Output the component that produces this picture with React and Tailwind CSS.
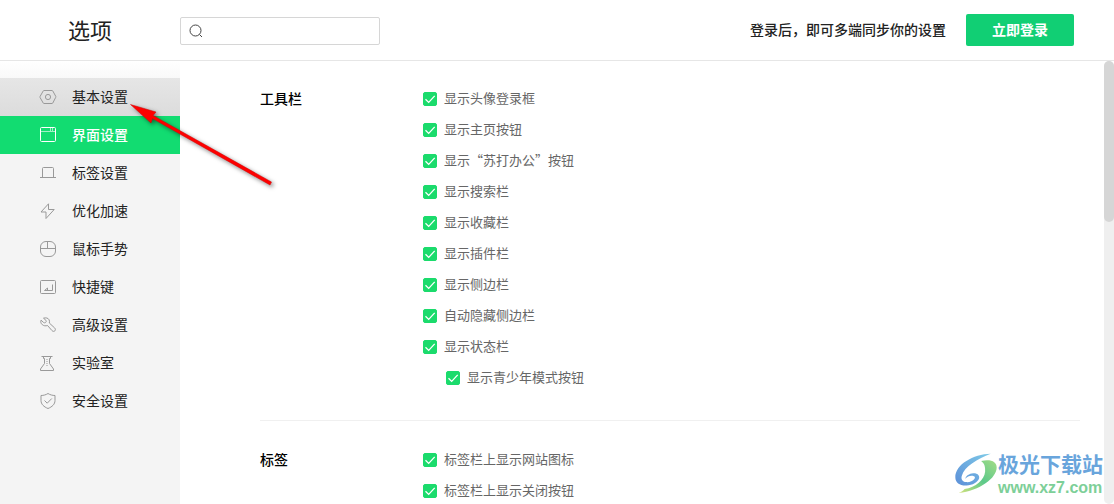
import { useState } from "react";

const iconProps = {
  width: 18,
  height: 18,
  viewBox: "0 0 18 18",
  fill: "none",
  stroke: "currentColor",
  strokeWidth: 1,
  "aria-hidden": true,
};

const BasicIcon = () => (
  <svg {...iconProps}>
    <path d="M5 2.5h8c.4 0 .6.2.8.5l2.9 5.2c.2.4.2.8 0 1.2L13.8 15c-.2.3-.4.5-.8.5H5c-.4 0-.6-.2-.8-.5L1.1 9.6c-.2-.4-.2-.8 0-1.2L4.2 3c.2-.3.4-.5.8-.5z" />
    <circle cx="9" cy="9" r="2.6" />
  </svg>
);

const WindowIcon = () => (
  <svg {...iconProps}>
    <rect x="1.5" y="1.5" width="15" height="14" rx="1" />
    <path d="M2 5.5h14M11.5 2v3M13.5 2v3" opacity="0.6" />
  </svg>
);

const TabIcon = () => (
  <svg {...iconProps}>
    <path d="M1 13.5h16M3.5 13.5V4.5a1 1 0 0 1 1-1h9a1 1 0 0 1 1 1v9" />
  </svg>
);

const BoltIcon = () => (
  <svg {...iconProps}>
    <path d="M9.5 1.8 2 10h5v6.5l8.200-9H9.500z" strokeLinejoin="round" />
  </svg>
);

const MouseIcon = () => (
  <svg {...iconProps}>
    <rect x="1.5" y="1.5" width="15" height="15" rx="5.5" />
    <path d="M1.5 8.5h15M8.5 1.5v7" />
  </svg>
);

const KeyIcon = () => (
  <svg {...iconProps}>
    <rect x="1.5" y="2.5" width="15" height="13" rx="1" />
    <path d="M13.5 6.500v6H5.500l3-2.500v2" />
  </svg>
);

const WrenchIcon = () => (
  <svg {...iconProps}>
    <path
      d="M4.5 2.200c2.400-.8 4.700-.2 5.600 1.600.5 1 .5 2 .2 3.200l5.300 4.900c1 1 1 2.100.3 2.900-.8.800-2 .800-2.900-.2L8.500 9.500c-1.700.6-3.900.4-5.200-.8C1.800 7.400 1.400 5.700 2 4.200l2.600 2.300c.8.500 1.600.4 2.200-.2.600-.6.600-1.300.1-2z"
      strokeLinejoin="round"
    />
  </svg>
);

const LabIcon = () => (
  <svg {...iconProps}>
    <path
      d="M2.500 2.500h11M4.500 2.500v2h1v5L1.500 15v1.500h13V15l-4-5.500v-5h1v-2"
      strokeLinejoin="round"
    />
    <path d="M8 5v7" strokeDasharray="1 1" />
  </svg>
);

const ShieldIcon = () => (
  <svg {...iconProps}>
    <path
      d="M9 1.500c2 1.300 4.500 2 7 2v5c0 3.700-2.800 6.300-7 8-4.200-1.700-7-4.300-7-8v-5c2.500 0 5-.7 7-2z"
      strokeLinejoin="round"
    />
    <path d="m5.500 8.500 2.700 2.700 4.600-4.700" />
  </svg>
);

const menu = [
  { label: "基本设置", Icon: BasicIcon },
  { label: "界面设置", Icon: WindowIcon },
  { label: "标签设置", Icon: TabIcon },
  { label: "优化加速", Icon: BoltIcon },
  { label: "鼠标手势", Icon: MouseIcon },
  { label: "快捷键", Icon: KeyIcon },
  { label: "高级设置", Icon: WrenchIcon },
  { label: "实验室", Icon: LabIcon },
  { label: "安全设置", Icon: ShieldIcon },
];

const toolbarOptions = [
  { label: "显示头像登录框" },
  { label: "显示主页按钮" },
  { label: "显示“苏打办公”按钮" },
  { label: "显示搜索栏" },
  { label: "显示收藏栏" },
  { label: "显示插件栏" },
  { label: "显示侧边栏" },
  { label: "自动隐藏侧边栏" },
  { label: "显示状态栏" },
  { label: "显示青少年模式按钮", nested: true },
];

const tabOptions = [
  { label: "标签栏上显示网站图标" },
  { label: "标签栏上显示关闭按钮" },
];

const Option = ({ label, nested }) => (
  <label
    className={`flex h-5 items-center gap-[7px] text-[13px] text-[#666] ${nested ? "pl-[23px]" : ""}`}
  >
    <span className="relative size-3.5">
      <input
        type="checkbox"
        defaultChecked
        className="peer block size-3.5 appearance-none rounded-[2px] border border-gray-300 checked:border-[#1bdb6c] checked:bg-[#1bdb6c]"
      />
      <svg
        viewBox="0 0 14 14"
        fill="none"
        stroke="white"
        strokeWidth="1.3"
        className="pointer-events-none absolute inset-0 hidden size-3.5 peer-checked:block"
        aria-hidden="true"
      >
        <path d="m2.500 7.200 3.200 3.200 6-6.500" />
      </svg>
    </span>
    <span className="pb-0.5">{label}</span>
  </label>
);

const Section = ({ title, options }) => (
  <section className="flex">
    <h2 className="w-[163px] shrink-0 text-sm leading-[18px] font-medium text-black">
      {title}
    </h2>
    <div className="flex flex-col gap-[11px]">
      {options.map((option) => (
        <Option key={option.label} {...option} />
      ))}
    </div>
  </section>
);

const Arrow = () => (
  <svg
    width="160"
    height="100"
    viewBox="0 0 160 100"
    className="pointer-events-none absolute top-[95px] left-[122px] overflow-visible"
    style={{ filter: "drop-shadow(2px 2px 2px rgba(0,0,0,0.5))" }}
    aria-hidden="true"
  >
    <path
      d="M8.500 9.500 34 17l-3 3.500L149.500 87l-1.500 3L30.500 23.500 29 28z"
      fill="#fe0000"
      stroke="#d00404"
      strokeWidth="0.5"
    />
  </svg>
);

const Watermark = () => (
  <div className="pointer-events-none absolute right-[11px] bottom-1.5 flex items-center gap-px">
    <svg width="43" height="43" viewBox="26 22 130 130" aria-hidden="true">
      <defs>
        <linearGradient id="swooshBlue" x1="0" y1="1" x2="1" y2="0">
          <stop offset="0" stopColor="#5c8fd8" />
          <stop offset="1" stopColor="#7fcbe8" />
        </linearGradient>
        <linearGradient id="swooshGreen" x1="0" y1="1" x2="1" y2="0">
          <stop offset="0" stopColor="#d3e27c" />
          <stop offset="0.5" stopColor="#5cc98a" />
          <stop offset="1" stopColor="#a3dc86" />
        </linearGradient>
      </defs>
      <path
        d="M137 27C84 28 30 60 30 98c0 17 14 26 34 25 18-1 34-10 38-22 2-9-6-16-18-15-12 1-22 8-24 17 6-7 14-10 22-9 7 1 9 5 6 9-5 7-16 11-25 10-12-1-17-9-13-20C57 66 98 42 137 27z"
        fill="url(#swooshBlue)"
      />
      <path
        d="M108 49c30-6 47 2 47 20 0 32-51 70-115 77 8-3 14-7 18-12 34-4 60-28 62-52 1-16-2-26-12-33z"
        fill="url(#swooshGreen)"
      />
    </svg>
    <div className="flex flex-col">
      <span className="text-[21px] leading-[30px] font-bold text-[#69a5dc]">
        极光下载站
      </span>
      <span className="font-['Liberation_Sans',sans-serif] text-[16px] leading-5 font-bold text-[#7dcf98]">
        www.xz7.com
      </span>
    </div>
  </div>
);

export default function App() {
  const [active, setActive] = useState("界面设置");

  return (
    <div className="relative flex h-screen flex-col overflow-hidden bg-white font-['Noto_Sans_CJK_SC',sans-serif] text-[#222]">
      <header className="flex h-[61px] shrink-0 items-center border-b border-[#e6e6e6] pr-10 pl-[68px]">
        <h1 className="w-28 pb-0.5 text-[22px]">选项</h1>
        <label className="mt-0.5 flex h-7 w-[200px] items-center rounded-[2px] border border-[#d6d6d6] px-[7px]">
          <svg
            width="16"
            height="16"
            viewBox="0 0 16 16"
            fill="none"
            stroke="#444"
            strokeWidth="1"
            aria-hidden="true"
          >
            <circle cx="7.5" cy="7.5" r="5.5" />
            <path d="m11.500 11.500 2.500 2.500" />
          </svg>
          <input
            type="text"
            aria-label="搜索"
            className="ml-1 min-w-0 flex-1 text-sm outline-none"
          />
        </label>
        <p className="ml-auto pb-0.5 text-sm font-medium">
          登录后，即可多端同步你的设置
        </p>
        <button
          type="button"
          className="ml-5 h-8 w-[108px] rounded-[2px] bg-[#11cf74] pb-0.5 text-sm font-bold text-white"
        >
          立即登录
        </button>
      </header>

      <div className="flex min-h-0 flex-1">
        <nav className="flex w-[180px] shrink-0 flex-col bg-[#f4f4f4]">
          <div className="h-[17px] shrink-0 bg-linear-to-b from-white to-[#f9f9f9]" />
          {menu.map(({ label, Icon }, index) => (
            <button
              key={label}
              type="button"
              onClick={() => setActive(label)}
              className={`flex h-[38px] shrink-0 items-center gap-[15px] pl-[39px] text-sm ${
                label === active
                  ? "bg-[#12dc71] font-medium text-white"
                  : index === 0
                    ? "bg-linear-to-b from-[#e6e6e6] to-[#dcdcdc]"
                    : ""
              }`}
            >
              <span className={label === active ? "text-white" : "text-[#999]"}>
                <Icon />
              </span>
              <span className="pb-0.5">{label}</span>
            </button>
          ))}
        </nav>

        <main className="min-w-0 flex-1 overflow-hidden pt-7 pr-6 pl-20">
          <Section title="工具栏" options={toolbarOptions} />
          <hr className="mt-8 mb-[29px] border-[#f0f0f0]" />
          <Section title="标签" options={tabOptions} />
        </main>

        {/* Scrollbar */}
        <div className="w-2.5 shrink-0 rounded-full bg-[#efefef]">
          <div className="h-[161px] rounded-full bg-[#d6d6d6]" />
        </div>
      </div>

      <Arrow />
      <Watermark />
    </div>
  );
}
